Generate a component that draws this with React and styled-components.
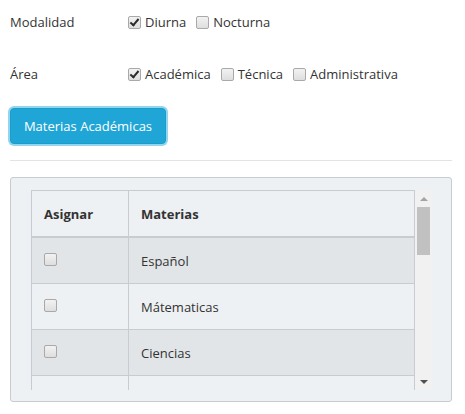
import React from 'react';
import styled, { createGlobalStyle } from 'styled-components';

const colors = {
  text: '#333333',
  border: '#c8cbcf',
  panel: '#eef1f4',
  stripe: '#e2e5e8',
  info: '#1fa6d6',
  ring: '#93d5ef',
};

const GlobalStyle = createGlobalStyle`
  body {
    margin: 0;
    background: #ffffff;
    font-family: "Open Sans", "Noto Sans", sans-serif;
    font-size: 13px;
    color: ${colors.text};
  }
`;

const Page = styled.div`
  padding: 12px 13px 0 10px;
`;

const FormRow = styled.div`
  display: grid;
  grid-template-columns: 118px 1fr;
  align-items: center;
  height: 20px;
  margin-top: ${p => p.$gap || 0}px;
`;

const Label = styled.span``;

const Options = styled.div`
  display: flex;
  align-items: center;
`;

const Option = styled.label`
  display: flex;
  align-items: center;
  gap: 4px;
  margin-right: 10px;
`;

const Check = styled.input.attrs({ type: 'checkbox' })`
  appearance: none;
  position: relative;
  width: 13px;
  height: 13px;
  margin: 0;
  border: 1px solid #a9a9a9;
  border-radius: 2px;
  background: linear-gradient(#f2f2f2, #dedede);

  &:checked::after {
    content: '';
    position: absolute;
    left: 3px;
    top: 0px;
    width: 3px;
    height: 7px;
    border-right: 2px solid #2b2b2b;
    border-bottom: 2px solid #2b2b2b;
    transform: rotate(40deg);
  }
`;

const Button = styled.button`
  display: block;
  margin-top: 24px;
  width: 156px;
  height: 36px;
  padding: 0;
  border: 1px solid #1b9ccb;
  border-radius: 4px;
  background: ${colors.info};
  color: #ffffff;
  font-family: inherit;
  font-size: 13px;
  box-shadow: 0 0 0 2px ${colors.ring};
`;

const Rule = styled.hr`
  margin: 16px 0 0;
  border: 0;
  border-top: 1px solid #e3e3e3;
`;

const Well = styled.div`
  margin-top: 16px;
  padding: 12px 19px 11px 20px;
  background: ${colors.panel};
  border: 1px solid ${colors.border};
  border-radius: 3px;
`;

const Scroller = styled.div`
  display: flex;
  height: 200px;
`;

const Clip = styled.div`
  flex: 1;
  overflow: hidden;
`;

const Table = styled.table`
  width: 100%;
  border-collapse: collapse;
`;

const Th = styled.th`
  height: 45px;
  padding: 0 12px;
  text-align: left;
  font-weight: 700;
  border: 1px solid ${colors.border};
  border-bottom-width: 2px;
  width: ${p => p.$w || 'auto'};
`;

const Row = styled.tr`
  background: ${p => (p.$odd ? colors.stripe : colors.panel)};
`;

const Td = styled.td`
  height: 45px;
  padding: 0 12px;
  border: 1px solid ${colors.border};
  vertical-align: middle;
`;

const Scrollbar = styled.div`
  width: 17px;
  display: flex;
  flex-direction: column;
  background: #f1f1f1;
`;

const Arrow = styled.div`
  height: 17px;
  display: flex;
  align-items: center;
  justify-content: center;

  &::before {
    content: '';
    border-left: 4px solid transparent;
    border-right: 4px solid transparent;
    ${p =>
      p.$up
        ? 'border-bottom: 4px solid #a3a3a3;'
        : 'border-top: 4px solid #505050;'}
  }
`;

const Thumb = styled.div`
  height: 48px;
  margin: 0 2px;
  background: #c1c1c1;
`;

const Spacer = styled.div`
  flex: 1;
`;

const materias = ['Español', 'Mátematicas', 'Ciencias', 'Sociales'];

export default function App() {
  return (
    <Page>
      <GlobalStyle />
      <FormRow>
        <Label>Modalidad</Label>
        <Options>
          <Option><Check defaultChecked />Diurna</Option>
          <Option><Check />Nocturna</Option>
        </Options>
      </FormRow>
      <FormRow $gap={32}>
        <Label>Área</Label>
        <Options>
          <Option><Check defaultChecked />Académica</Option>
          <Option><Check />Técnica</Option>
          <Option><Check />Administrativa</Option>
        </Options>
      </FormRow>
      <Button>Materias Académicas</Button>
      <Rule />
      <Well>
        <Scroller>
          <Clip>
            <Table>
              <thead>
                <tr>
                  <Th $w="72px">Asignar</Th>
                  <Th>Materias</Th>
                </tr>
              </thead>
              <tbody>
                {materias.map((m, i) => (
                  <Row key={m} $odd={i % 2 === 0}>
                    <Td><Check /></Td>
                    <Td>{m}</Td>
                  </Row>
                ))}
              </tbody>
            </Table>
          </Clip>
          <Scrollbar>
            <Arrow $up />
            <Thumb />
            <Spacer />
            <Arrow />
          </Scrollbar>
        </Scroller>
      </Well>
    </Page>
  );
}
